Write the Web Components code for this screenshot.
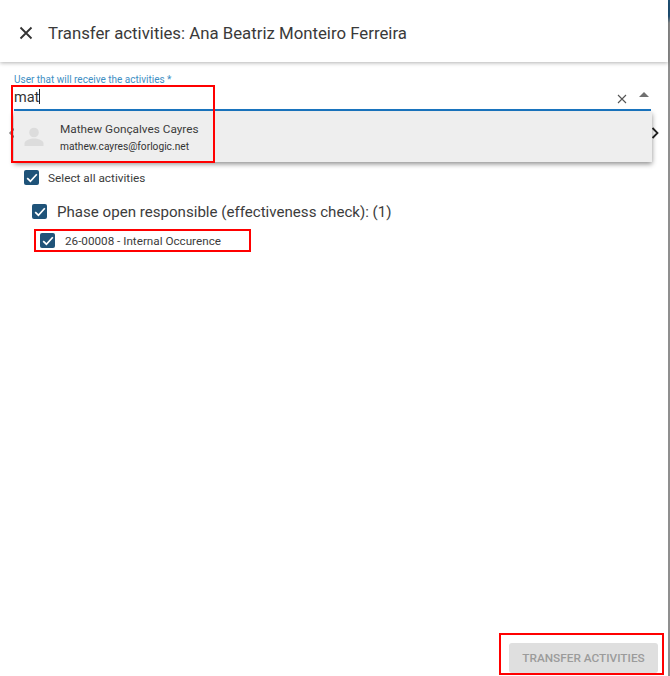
<!DOCTYPE html>
<html>
<head>
<meta charset="utf-8">
<style>
  html, body { margin: 0; height: 100%; background: #fff; }
  body { font-family: Roboto, "Liberation Sans", sans-serif; color: #3c3c3c; overflow: hidden; }
</style>
</head>
<body>
<transfer-dialog title-text="Transfer activities: Ana Beatriz Monteiro Ferreira">
  <user-select label="User that will receive the activities *" value="mat" name="Mathew Gonçalves Cayres" email="mathew.cayres@forlogic.net"></user-select>
  <check-row font="11.8" left="24" top="10" gap="9" text="Select all activities"></check-row>
  <check-row font="15.1" left="32" top="19" gap="10" text="Phase open responsible (effectiveness check): (1)"></check-row>
  <check-row font="11.7" left="40" top="14" gap="10" text="26-00008 - Internal Occurence"></check-row>
  <mark-box slot="marks" style="left:11px;top:85px;width:204px;height:78px"></mark-box>
  <mark-box slot="marks" style="left:34px;top:229px;width:217px;height:23px"></mark-box>
  <mark-box slot="marks" style="left:499px;top:633px;width:165px;height:42px"></mark-box>
</transfer-dialog>

<script>
  class TransferDialog extends HTMLElement {
    constructor() {
      super();
      const root = this.attachShadow({ mode: "open" });
      root.innerHTML = `
<style>
  :host { display: flex; flex-direction: column; position: relative; width: 670px; height: 676px; box-sizing: border-box; border-right: 2px solid #8f8f8f; border-image: linear-gradient(#1f5379 0, #1f5379 17px, #8f8f8f 24px) 1; background: #fff; }
  header { display: flex; align-items: center; gap: 15px; height: 62px; flex: none; padding: 4px 0 0 19px; box-sizing: border-box; box-shadow: 0 1px 4px rgba(0,0,0,.3); position: relative; }
  h1 { margin: 0; font-size: 16.8px; font-weight: 400; color: #3a3a3a; white-space: nowrap; }
  svg { display: block; flex: none; }
  main { flex: 1; display: flex; flex-direction: column; padding-top: 11px; }
  footer { flex: none; display: flex; justify-content: flex-end; padding: 0 10px 3px 0; }
  button { width: 149px; height: 30px; border: 0; border-radius: 3px; background: #dfdfdf; color: #9b9b9b; font: 500 11.8px Roboto, sans-serif; padding: 0; }
</style>
<header>
  <svg width="14" height="14" viewBox="0 0 14 14"><path d="M1.5 1.5l11 11M12.5 1.5l-11 11" stroke="#333" stroke-width="1.8" fill="none"/></svg>
  <h1></h1>
</header>
<main><slot></slot></main>
<footer><button type="button">TRANSFER ACTIVITIES</button></footer>
<slot name="marks"></slot>`;
      root.querySelector("h1").textContent = this.getAttribute("title-text");
    }
  }

  class UserSelect extends HTMLElement {
    constructor() {
      super();
      const root = this.attachShadow({ mode: "open" });
      root.innerHTML = `
<style>
  :host { display: block; position: relative; height: 87px; }
  .field { margin: 0 17px 0 14px; height: 38px; border-bottom: 2px solid #1a76c2; box-sizing: border-box; position: relative; }
  label { display: block; padding-top: 1px; font-size: 10px; line-height: 12px; color: #3f8fc4; }
  .row { display: flex; align-items: center; height: 23px; }
  .val { flex: 1; font-size: 14.5px; color: #333; }
  .val i { display: inline-block; width: 1px; height: 15px; background: #222; vertical-align: -2px; }
  .clear { margin-right: 12px; margin-top: 2px; }
  .caret { width: 0; height: 0; margin: 0 2px 6px 0; border: 5.5px solid transparent; border-top: 0; border-bottom: 5px solid #707070; }
  .nav { position: absolute; top: 53px; }
  .menu { position: absolute; left: 14px; top: 39px; width: 638px; height: 50px; background: #eeeeee; box-shadow: 0 2px 5px rgba(0,0,0,.45); display: flex; align-items: center; }
  .avatar { margin: 0 15px 0 9px; }
  .name { font-size: 11.8px; line-height: 16px; color: #3c3c3c; }
  .mail { font-size: 10.2px; line-height: 16px; color: #333; }
  .txt { display: flex; flex-direction: column; gap: 2px; padding-top: 2px; }
</style>
<div class="field">
  <label></label>
  <div class="row">
    <div class="val"><span></span><i></i></div>
    <svg class="clear" width="10" height="10" viewBox="0 0 10 10"><path d="M1 1l8 8M9 1l-8 8" stroke="#555" stroke-width="1.1" fill="none"/></svg>
    <div class="caret"></div>
  </div>
</div>
<svg class="nav" style="left:8px" width="8" height="14" viewBox="0 0 8 14"><path d="M7 2L2 7l5 5" stroke="#8a8a8a" stroke-width="1.6" fill="none"/></svg>
<svg class="nav" style="left:651px" width="8" height="14" viewBox="0 0 8 14"><path d="M1.5 2l5 5-5 5" stroke="#222" stroke-width="1.8" fill="none"/></svg>
<div class="menu">
  <svg class="avatar" width="22" height="22" viewBox="0 0 22 22"><circle cx="11" cy="6.5" r="4.8" fill="#dcdcdc"/><path d="M1.5 20v-2.500c0-3.400 6-5 9.500-5s9.500 1.600 9.500 5V20z" fill="#dcdcdc"/></svg>
  <div class="txt"><div class="name"></div><div class="mail"></div></div>
</div>`;
      root.querySelector("label").textContent = this.getAttribute("label");
      root.querySelector(".val span").textContent = this.getAttribute("value");
      root.querySelector(".name").textContent = this.getAttribute("name");
      root.querySelector(".mail").textContent = this.getAttribute("email");
    }
  }

  class CheckRow extends HTMLElement {
    constructor() {
      super();
      const root = this.attachShadow({ mode: "open" });
      root.innerHTML = `
<style>
  :host { display: flex; align-items: center; height: 15px; flex: none; }
  .box { width: 15px; height: 15px; border-radius: 2px; background: #1f5379; flex: none; display: flex; align-items: center; justify-content: center; }
  span { white-space: nowrap; }
</style>
<div class="box"><svg width="12" height="10" viewBox="0 0 12 10"><path d="M1.200 5.200l3.200 3 6.400-7" stroke="#fff" stroke-width="1.700" fill="none"/></svg></div>
<span></span>`;
      root.querySelector("span").textContent = this.getAttribute("text");
      root.querySelector("span").style.fontSize = this.getAttribute("font") + "px";
      this.style.gap = this.getAttribute("gap") + "px";
      this.style.marginLeft = this.getAttribute("left") + "px";
      this.style.marginTop = this.getAttribute("top") + "px";
    }
  }

  class MarkBox extends HTMLElement {
    constructor() {
      super();
      const root = this.attachShadow({ mode: "open" });
      root.innerHTML = `<style>:host { display: block; position: absolute; box-sizing: border-box; border: 2px solid #f00; pointer-events: none; }</style>`;
    }
  }

  customElements.define("transfer-dialog", TransferDialog);
  customElements.define("user-select", UserSelect);
  customElements.define("check-row", CheckRow);
  customElements.define("mark-box", MarkBox);
</script>
</body>
</html>
